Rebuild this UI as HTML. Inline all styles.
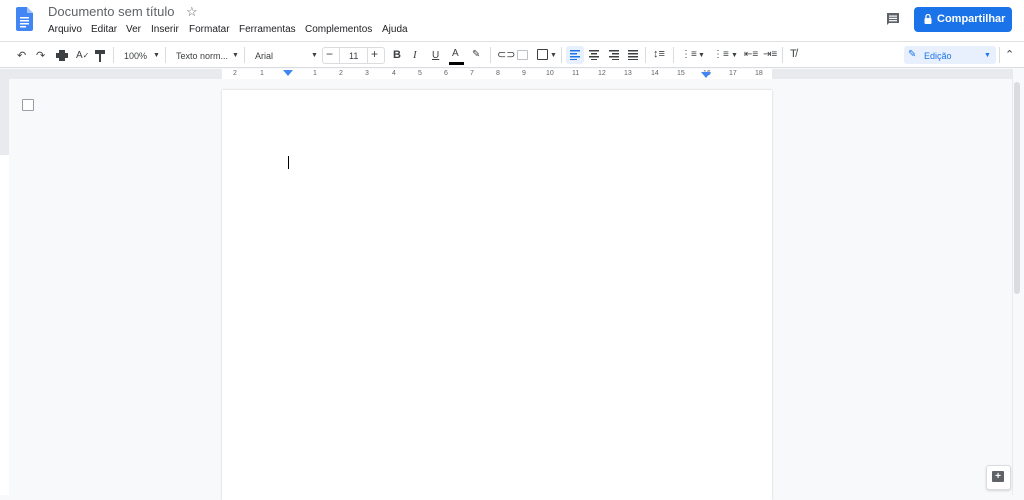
<!DOCTYPE html>
<html><head><meta charset="utf-8"><style>
*{margin:0;padding:0;box-sizing:border-box}
body{width:1024px;height:495px;overflow:hidden;background:#f8f9fa;font-family:"Liberation Sans",Arial,sans-serif;position:relative;color:#3c4043}
.abs{position:absolute}
#top{left:0;top:0;width:1024px;height:42px;background:#fff;border-bottom:1px solid #e0e0e0}
.title{left:48px;top:4px;font-size:13px;color:#5f6368}
.menu{top:24px;font-size:10px;color:#202124}
#tb{left:0;top:42px;width:1024px;height:26px;background:#fff;border-bottom:1px solid #dadce0}
.t{position:absolute;top:9px;font-size:9px;color:#3c4043}
.sep{position:absolute;top:5px;width:1px;height:16px;background:#dadce0}
#ruler{left:0;top:69px;width:1012px;height:10px;background:#e8eaed}
.r{position:absolute;top:1px;font-size:7px;color:#5f6368}
</style></head><body>
<div id="top" class="abs">
 <svg class="abs" style="left:16px;top:7px" width="17" height="24" viewBox="0 0 17 24"><path d="M2 0h9l6 6v16a2 2 0 0 1-2 2H2a2 2 0 0 1-2-2V2a2 2 0 0 1 2-2z" fill="#4285f4"/><path d="M11 0v6h6z" fill="#a1c2fa"/><rect x="4" y="10" width="9" height="1.5" fill="#fff"/><rect x="4" y="13" width="9" height="1.5" fill="#fff"/><rect x="4" y="16" width="9" height="1.5" fill="#fff"/><rect x="4" y="19" width="6" height="1.5" fill="#fff"/></svg>
 <div class="abs title">Documento sem título</div>
 <div class="abs" style="left:186px;top:4px;font-size:13px;color:#5f6368">☆</div>
 <div class="abs menu" style="left:48px">Arquivo</div>
 <div class="abs menu" style="left:91px">Editar</div>
 <div class="abs menu" style="left:126px">Ver</div>
 <div class="abs menu" style="left:151px">Inserir</div>
 <div class="abs menu" style="left:189px">Formatar</div>
 <div class="abs menu" style="left:239px">Ferramentas</div>
 <div class="abs menu" style="left:305px">Complementos</div>
 <div class="abs menu" style="left:382px">Ajuda</div>
 <svg class="abs" style="left:886px;top:12px" width="14" height="14" viewBox="0 0 14 14"><path d="M1 1h12v10H3l-2 2z" fill="#5f6368"/><rect x="3" y="3.5" width="8" height="1.2" fill="#fff"/><rect x="3" y="5.8" width="8" height="1.2" fill="#fff"/><rect x="3" y="8.1" width="8" height="1.2" fill="#fff"/></svg>
 <div class="abs" style="left:914px;top:7px;width:98px;height:25px;background:#1a73e8;border-radius:4px;color:#fff;font-size:11px;font-weight:bold;line-height:25px;padding-left:23px">Compartilhar</div>
 <svg class="abs" style="left:924px;top:14px" width="8" height="10" viewBox="0 0 8 10"><rect x="0.5" y="4" width="7" height="6" rx="1" fill="#fff"/><path d="M2 4V2.5a2 2 0 0 1 4 0V4" stroke="#fff" stroke-width="1.3" fill="none"/></svg>
</div>
<div id="tb" class="abs">
 <div class="t" style="left:17px;font-size:11px;top:7px">↶</div>
 <div class="t" style="left:36px;font-size:11px;top:7px">↷</div>
 <svg class="abs" style="left:56px;top:8px" width="12" height="11" viewBox="0 0 12 11"><rect x="0" y="3" width="12" height="5" fill="#3c4043"/><rect x="3" y="0" width="6" height="3" fill="#3c4043"/><rect x="3" y="7" width="6" height="4" fill="#3c4043"/></svg>
 <div class="t" style="left:76px;font-size:10px;top:8px">A<span style="font-size:8px">✓</span></div>
 <svg class="abs" style="left:95px;top:8px" width="10" height="12" viewBox="0 0 10 12"><rect x="0" y="0" width="10" height="4" fill="#3c4043"/><rect x="4" y="4" width="2" height="8" fill="#3c4043"/></svg>
 <div class="sep" style="left:113px"></div>
 <div class="t" style="left:124px">100%</div><div class="t" style="left:153px;font-size:7px;top:10px">▼</div>
 <div class="sep" style="left:165px"></div>
 <div class="t" style="left:176px">Texto norm...</div><div class="t" style="left:232px;font-size:7px;top:10px">▼</div>
 <div class="sep" style="left:244px"></div>
 <div class="t" style="left:255px">Arial</div><div class="t" style="left:311px;font-size:7px;top:10px">▼</div>
 <div class="abs" style="left:322px;top:5px;width:63px;height:17px;border:1px solid #dadce0;border-radius:3px"></div>
 <div class="abs" style="left:339px;top:5px;width:1px;height:17px;background:#dadce0"></div>
 <div class="abs" style="left:367px;top:5px;width:1px;height:17px;background:#dadce0"></div>
 <div class="t" style="left:326px;font-size:12px;top:5px">−</div>
 <div class="t" style="left:349px">11</div>
 <div class="t" style="left:371px;font-size:12px;top:5px">+</div>
 <div class="t" style="left:393px;font-weight:bold;font-size:11px;top:7px">B</div>
 <div class="t" style="left:413px;font-style:italic;font-size:11px;top:7px;font-family:'Liberation Serif',serif">I</div>
 <div class="t" style="left:432px;text-decoration:underline;font-size:10px;top:8px">U</div>
 <div class="t" style="left:452px;font-size:10px;top:6px">A</div>
 <div class="abs" style="left:449px;top:20px;width:15px;height:3px;background:#000"></div>
 <div class="t" style="left:472px;font-size:10px;top:7px">✎</div>
 <div class="sep" style="left:490px"></div>
 <div class="t" style="left:497px;font-size:11px;top:6px">⊂⊃</div>
 <div class="abs" style="left:517px;top:8px;width:11px;height:10px;border:1px solid #bdc1c6;border-radius:1px"></div>
 <div class="abs" style="left:537px;top:7px;width:11px;height:11px;border:1.5px solid #3c4043;border-radius:1px"></div>
 <div class="t" style="left:550px;font-size:7px;top:10px">▼</div>
 <div class="sep" style="left:561px"></div>
 <div class="abs" style="left:566px;top:4px;width:18px;height:18px;background:#e8f0fe;border-radius:3px"></div>
 <svg class="abs" style="left:570px;top:8px" width="72" height="10" viewBox="0 0 72 10"><g fill="#1a73e8"><rect x="0" y="0" width="10" height="1.5"/><rect x="0" y="3" width="7" height="1.5"/><rect x="0" y="6" width="10" height="1.5"/><rect x="0" y="9" width="7" height="1"/></g><g fill="#3c4043"><rect x="19" y="0" width="10" height="1.5"/><rect x="21" y="3" width="6" height="1.5"/><rect x="19" y="6" width="10" height="1.5"/><rect x="21" y="9" width="6" height="1"/><rect x="39" y="0" width="10" height="1.5"/><rect x="42" y="3" width="7" height="1.5"/><rect x="39" y="6" width="10" height="1.5"/><rect x="42" y="9" width="7" height="1"/><rect x="58" y="0" width="10" height="1.5"/><rect x="58" y="3" width="10" height="1.5"/><rect x="58" y="6" width="10" height="1.5"/><rect x="58" y="9" width="10" height="1"/></g></svg>
 <div class="sep" style="left:645px"></div>
 <div class="t" style="left:653px;font-size:11px;top:6px">↕≡</div>
 <div class="sep" style="left:673px"></div>
 <div class="t" style="left:681px;font-size:10px;top:7px">⋮≡</div><div class="t" style="left:698px;font-size:7px;top:10px">▼</div>
 <div class="t" style="left:713px;font-size:10px;top:7px">⋮≡</div><div class="t" style="left:731px;font-size:7px;top:10px">▼</div>
 <div class="t" style="left:744px;font-size:10px;top:7px">⇤≡</div>
 <div class="t" style="left:763px;font-size:10px;top:7px">⇥≡</div>
 <div class="sep" style="left:782px"></div>
 <div class="t" style="left:790px;font-size:11px;top:6px">T̸</div>
 <div class="abs" style="left:904px;top:4px;width:92px;height:18px;background:#e8f0fe;border-radius:3px"></div>
 <div class="t" style="left:908px;font-size:10px;top:7px;color:#1a73e8">✎</div>
 <div class="t" style="left:924px;color:#1a73e8;top:9px">Edição</div>
 <div class="t" style="left:984px;font-size:7px;top:10px;color:#1a73e8">▼</div>
 <div class="sep" style="left:999px"></div>
 <div class="t" style="left:1005px;font-size:11px;top:6px">⌃</div>
</div>
<div id="ruler" class="abs">
 <div class="abs" style="left:222px;top:0;width:550px;height:10px;background:#fff"></div>
 <span class="r" style="left:233px">2</span><span class="r" style="left:260px">1</span><span class="r" style="left:313px">1</span><span class="r" style="left:339px">2</span><span class="r" style="left:365px">3</span><span class="r" style="left:392px">4</span><span class="r" style="left:418px">5</span><span class="r" style="left:444px">6</span><span class="r" style="left:470px">7</span><span class="r" style="left:496px">8</span><span class="r" style="left:522px">9</span><span class="r" style="left:546px">10</span><span class="r" style="left:572px">11</span><span class="r" style="left:598px">12</span><span class="r" style="left:624px">13</span><span class="r" style="left:651px">14</span><span class="r" style="left:677px">15</span><span class="r" style="left:703px">16</span><span class="r" style="left:729px">17</span><span class="r" style="left:755px">18</span>
 <div class="abs" style="left:283px;top:1px;width:0;height:0;border-left:5px solid transparent;border-right:5px solid transparent;border-top:6px solid #4285f4"></div>
 <div class="abs" style="left:701px;top:3px;width:0;height:0;border-left:5px solid transparent;border-right:5px solid transparent;border-top:6px solid #4285f4"></div>
</div>
<div class="abs" style="left:0;top:79px;width:9px;height:416px;background:#e8eaed"></div>
<div class="abs" style="left:0;top:155px;width:9px;height:340px;background:#fff"></div>
<div class="abs" style="left:22px;top:99px;width:12px;height:12px;border:1px solid #9aa0a6;border-radius:1px;background:#fff"></div>
<div class="abs" style="left:222px;top:90px;width:550px;height:410px;background:#fff;box-shadow:0 0 2px rgba(0,0,0,.2)"></div>
<div class="abs" style="left:288px;top:156px;width:1px;height:13px;background:#000"></div>
<div class="abs" style="left:1012px;top:69px;width:12px;height:426px;background:#f8f9fa;border-left:1px solid #e8eaed"></div>
<div class="abs" style="left:1014px;top:82px;width:6px;height:212px;background:#dadce0;border-radius:3px"></div>
<div class="abs" style="left:986px;top:465px;width:25px;height:25px;background:#fff;border:1px solid #dadce0;border-radius:3px;box-shadow:0 1px 2px rgba(0,0,0,.15)"></div>
<div class="abs" style="left:992px;top:471px;width:12px;height:11px;background:#5f6368;border-radius:1px;color:#fff;font-size:10px;line-height:11px;text-align:center;font-weight:bold">+</div>
</body></html>
